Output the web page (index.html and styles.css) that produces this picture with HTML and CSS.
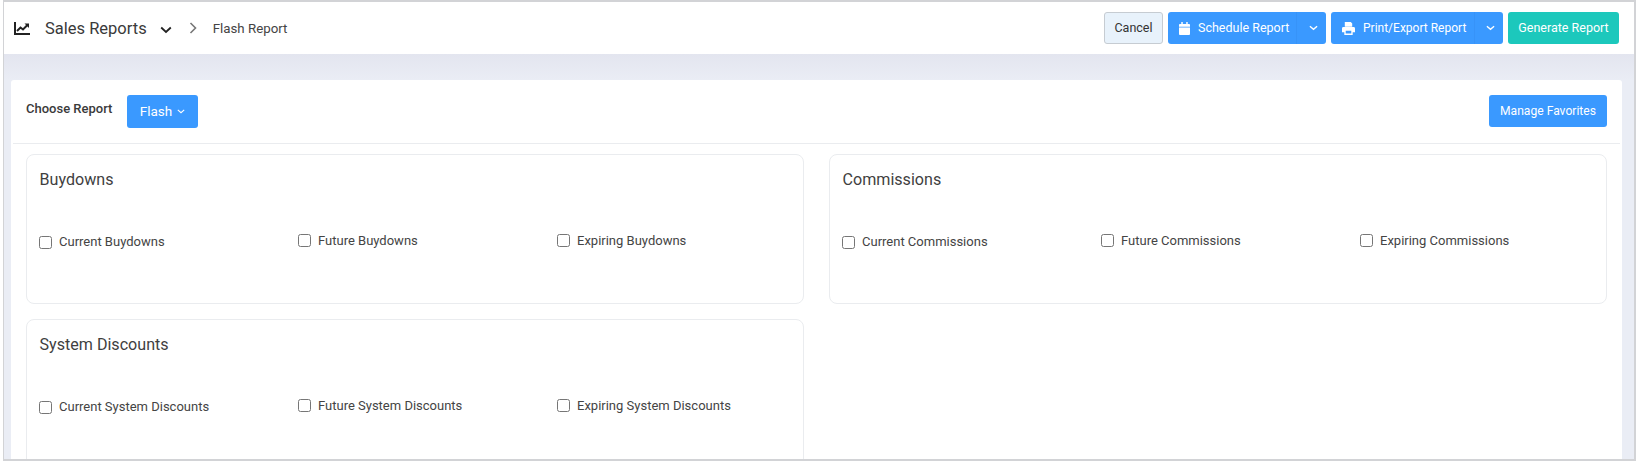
FILE: index.html
```html
<!DOCTYPE html>
<html lang="en">
<head>
<meta charset="utf-8">
<title>Flash Report</title>
<link rel="stylesheet" href="styles.css">
</head>
<body>
<div class="frame">
  <header class="topbar">
    <div class="crumbs">
      <svg class="ico-chart" viewBox="0 0 16 13" width="16" height="13"><path d="M1 0v12h15" fill="none" stroke="#222" stroke-width="2"/><path d="M3 9l3.500-3.500 2.500 2 4.200-4.200" fill="none" stroke="#222" stroke-width="2"/><path d="M10.500 1.500h4.500v4.500z" fill="#222"/></svg>
      <span class="module">Sales Reports</span>
      <svg class="ico-down" viewBox="0 0 12 8" width="12" height="8"><path d="M1.200 1.500L6 6l4.800-4.500" fill="none" stroke="#222" stroke-width="1.800"/></svg>
      <svg class="ico-next" viewBox="0 0 8 12" width="8" height="12"><path d="M1.500 1L6.500 6l-5 5" fill="none" stroke="#777" stroke-width="1.600"/></svg>
      <span class="page">Flash Report</span>
    </div>
    <div class="actions">
      <button class="btn btn-cancel" type="button"><span class="lbl">Cancel</span></button>
      <div class="split split-schedule">
        <button class="btn btn-blue split-main" type="button">
          <svg viewBox="0 0 12 14" width="11" height="13"><path d="M2.500 0h1.600v2h3.800V0h1.600v2H11a1 1 0 0 1 1 1v2H0V3a1 1 0 0 1 1-1h1.500zM0 6h12v7a1 1 0 0 1-1 1H1a1 1 0 0 1-1-1z" fill="#fff"/></svg>
          <span class="lbl">Schedule Report</span>
        </button>
        <button class="btn btn-blue split-caret" type="button" aria-label="More"><svg viewBox="0 0 10 6" width="9" height="6"><path d="M1 1l4 3.500L9 1" fill="none" stroke="#fff" stroke-width="1.500"/></svg></button>
      </div>
      <div class="split split-print">
        <button class="btn btn-blue split-main" type="button">
          <svg viewBox="0 0 14 14" width="13" height="13"><path d="M3 0h6.500L11 1.500V5H3zM1.500 5.500h11A1.500 1.500 0 0 1 14 7v4h-2.500v3h-9v-3H0V7a1.500 1.500 0 0 1 1.500-1.500zM4 9.500V12.500h6V9.500z" fill="#fff" fill-rule="evenodd"/></svg>
          <span class="lbl lbl-narrow">Print/Export Report</span>
        </button>
        <button class="btn btn-blue split-caret" type="button" aria-label="More"><svg viewBox="0 0 10 6" width="9" height="6"><path d="M1 1l4 3.500L9 1" fill="none" stroke="#fff" stroke-width="1.500"/></svg></button>
      </div>
      <button class="btn btn-teal" type="button"><span class="lbl">Generate Report</span></button>
    </div>
  </header>
  <main class="content">
    <section class="card">
      <div class="card-head">
        <div class="chooser">
          <span class="choose-label">Choose Report</span>
          <button class="btn btn-blue btn-flash" type="button"><span class="lbl lbl-flash">Flash</span> <svg viewBox="0 0 10 6" width="8" height="5"><path d="M1 1l4 3.500L9 1" fill="none" stroke="#fff" stroke-width="1.400"/></svg></button>
        </div>
        <button class="btn btn-blue btn-manage" type="button"><span class="lbl lbl-manage">Manage Favorites</span></button>
      </div>
      <div class="panels">
        <div class="panel">
          <h2>Buydowns</h2>
          <div class="opts">
            <label class="opt opt-first"><input type="checkbox"><span>Current Buydowns</span></label>
            <label class="opt"><input type="checkbox"><span>Future Buydowns</span></label>
            <label class="opt"><input type="checkbox"><span>Expiring Buydowns</span></label>
          </div>
        </div>
        <div class="panel">
          <h2>Commissions</h2>
          <div class="opts">
            <label class="opt opt-first"><input type="checkbox"><span>Current Commissions</span></label>
            <label class="opt"><input type="checkbox"><span>Future Commissions</span></label>
            <label class="opt"><input type="checkbox"><span>Expiring Commissions</span></label>
          </div>
        </div>
        <div class="panel">
          <h2>System Discounts</h2>
          <div class="opts">
            <label class="opt opt-first"><input type="checkbox"><span>Current System Discounts</span></label>
            <label class="opt"><input type="checkbox"><span>Future System Discounts</span></label>
            <label class="opt"><input type="checkbox"><span>Expiring System Discounts</span></label>
          </div>
        </div>
      </div>
    </section>
  </main>
</div>
</body>
</html>
```
FILE: styles.css
```css
* { box-sizing: border-box; }
html, body { margin: 0; height: 100%; overflow: hidden; background: #fff; }
body { padding: 0 3px 0 3px; font-family: Roboto, "Liberation Sans", sans-serif; color: #333; font-size: 13px; }
.frame {
  height: 100%;
  border: 1px solid #d2d3d6;
  border-width: 2px 2px 2px 1px;
  display: flex;
  flex-direction: column;
  overflow: hidden;
  background: #eaedf5;
}
.topbar {
  flex: none;
  height: 52px;
  background: #fff;
  display: flex;
  align-items: center;
  justify-content: space-between;
  padding: 0 15px 0 10px;
}
.crumbs { display: flex; align-items: center; }
.module { margin-left: 15px; font-size: 16.500px; color: #3a3a3a; }
.ico-down { margin-left: 13px; margin-top: 3px; }
.ico-next { margin-left: 17px; }
.page { margin-left: 16px; font-size: 13.300px; color: #444; }
.actions { display: flex; gap: 5px; }
.btn {
  height: 32px;
  border: 0;
  border-radius: 3px;
  font: 400 12.500px Roboto, "Liberation Sans", sans-serif;
  padding: 0;
  display: flex;
  align-items: center;
  justify-content: center;
  white-space: nowrap;
}
.lbl { margin-top: -1px; }
.lbl-narrow { font-size: 12px; }
.lbl-manage { font-size: 12.100px; }
.lbl-flash { margin-top: -2px; }
.btn-blue { background: #3a99ff; color: #fff; }
.btn-teal { background: #1cc8bc; color: #fff; width: 111px; }
.btn-cancel { width: 59px; background: #e8f2fb; border: 1px solid #c6ccd2; color: #333; }
.split { display: flex; }
.split-schedule { width: 158px; }
.split-print { width: 172px; }
.split-main { flex: 1; border-radius: 3px 0 0 3px; justify-content: flex-start; padding-left: 11px; gap: 8px; border-right: 1px solid #3793f8; }
.split-caret { width: 29px; border-radius: 0 3px 3px 0; padding-left: 3px; }
.split-print .split-caret { width: 28px; }
.content {
  flex: 1;
  min-height: 0;
  padding: 26px 12px 0 7px;
  background: linear-gradient(#e3e5ef, #eaedf5 26px);
}
.card { background: #fff; border-radius: 3px 3px 0 0; height: 100%; padding: 0 2px; }
.card-head {
  height: 64px;
  display: flex;
  align-items: flex-start;
  justify-content: space-between;
  border-bottom: 1px solid #eaecef;
  padding: 15px 13px 0 13px;
}
.chooser { display: flex; align-items: flex-start; }
.choose-label { font-weight: 500; font-size: 13px; color: #3a3a3a; margin-top: 6px; width: 101px; }
.btn-flash { width: 71px; height: 33px; font-size: 13.500px; gap: 5px; }
.btn-manage { width: 118px; }
.panels {
  display: grid;
  grid-template-columns: 778px 778px;
  column-gap: 25px;
  row-gap: 15px;
  padding: 10px 13px 0;
}
.panel {
  height: 150px;
  border: 1px solid #eaecef;
  border-radius: 8px;
  padding: 0 12px;
}
.panel h2 { margin: 15px 0 0 0.500px; font-weight: 400; font-size: 16.100px; line-height: 20px; color: #3f3f3f; }
.opts { display: grid; grid-template-columns: repeat(3, 259px); margin-top: 43px; align-items: start; }
.opt { display: flex; align-items: center; font-size: 13px; line-height: 15px; color: #444; }
.opt-first { margin-top: 1px; }
.opt input { margin: 0 7px 0 0; width: 13px; height: 13px; flex: none; }
.opt-first input { margin-top: 1px; }
```
